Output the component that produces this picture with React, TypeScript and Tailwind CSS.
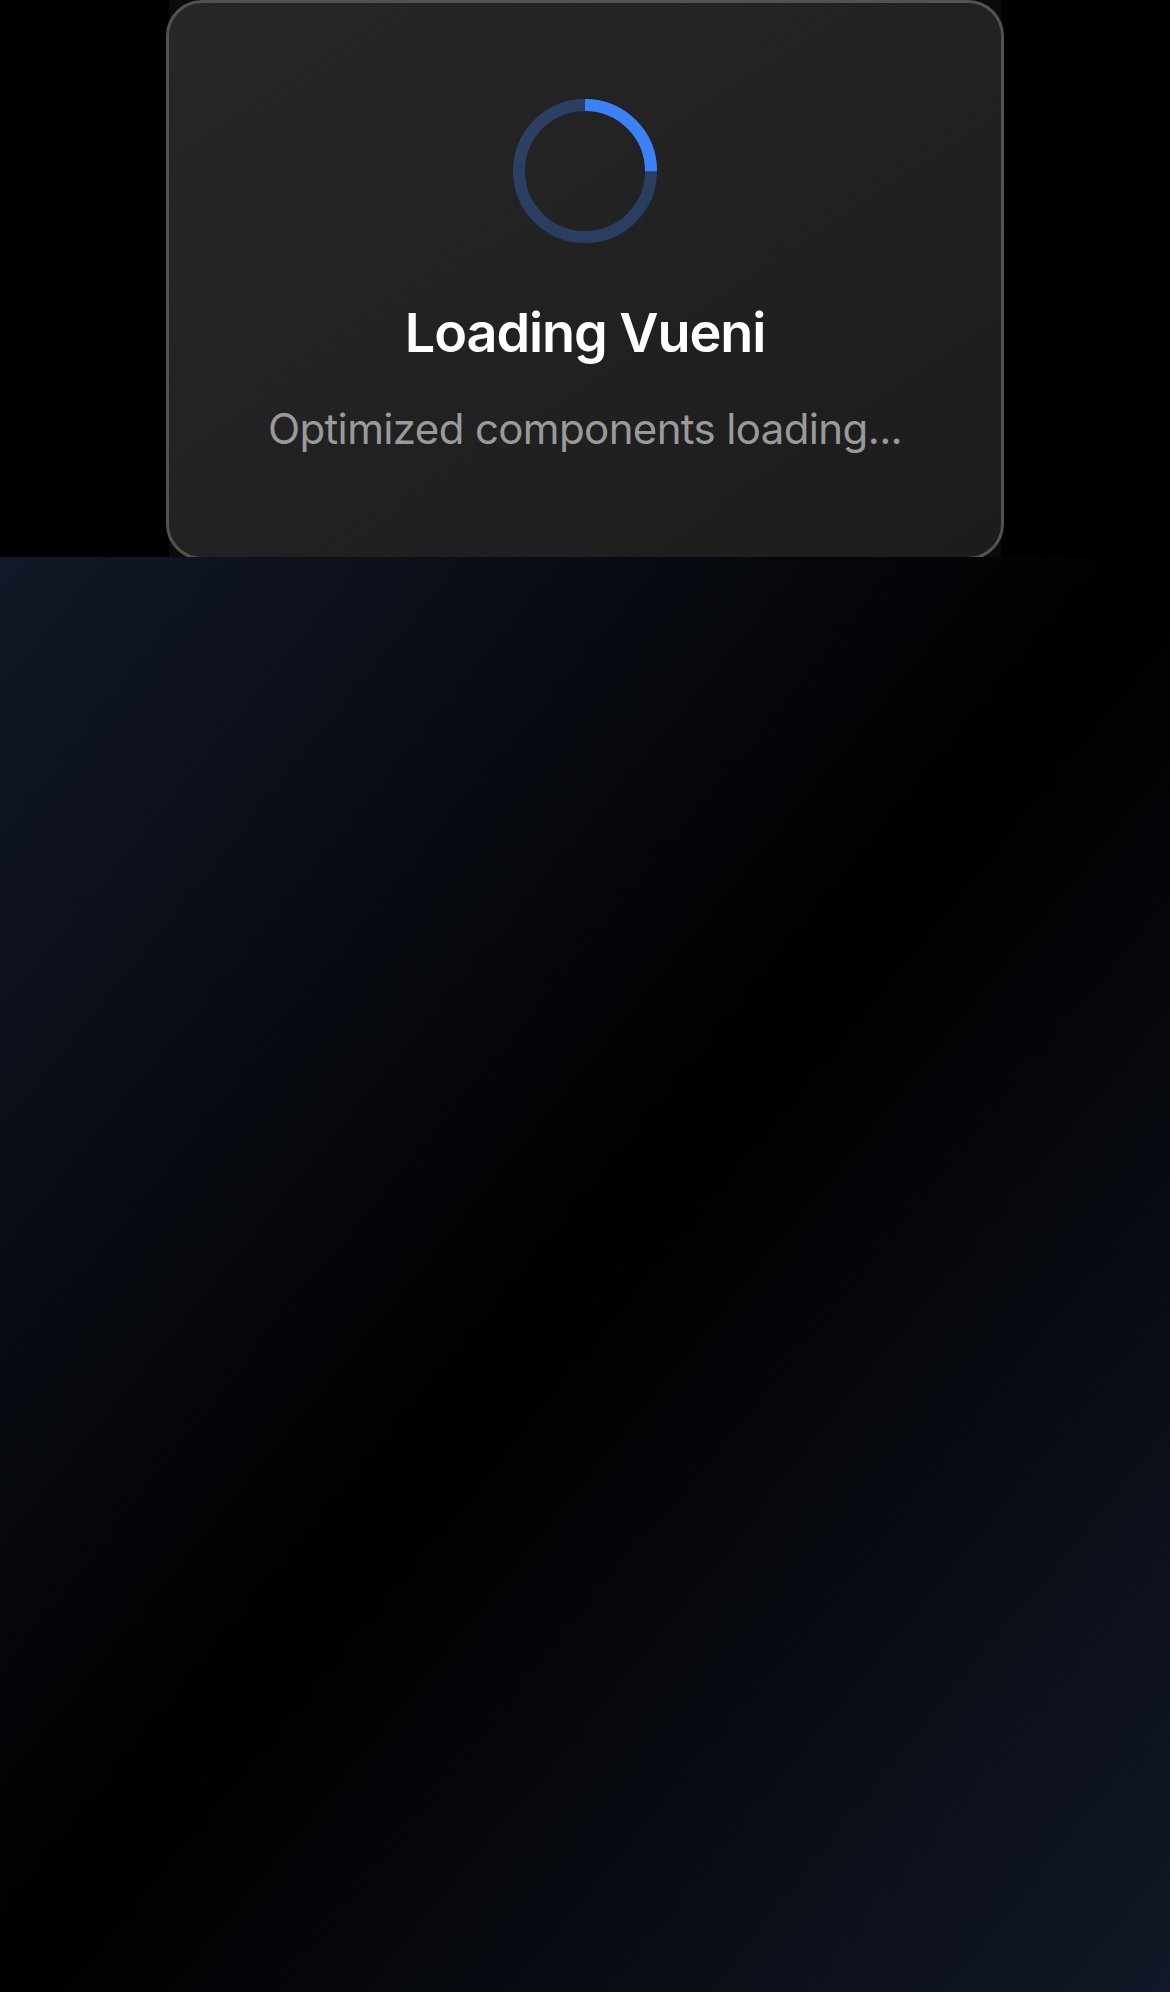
import React from 'react';

const Spinner: React.FC = () => (
    <svg className="w-[144px] h-[144px]" viewBox="0 0 144 144">
        <circle cx="72" cy="72" r="66" fill="none" stroke="#3b82f6" strokeOpacity="0.3" strokeWidth="12" />
        <circle
            cx="72"
            cy="72"
            r="66"
            fill="none"
            stroke="#3b82f6"
            strokeWidth="12"
            strokeDasharray="103.67 311.02"
            transform="rotate(-90 72 72)"
        />
    </svg>
);

const App: React.FC = () => {
    return (
        <div className="min-h-[1992px] flex flex-col bg-black font-['Inter','Liberation_Sans',sans-serif]">
            {/* loader */}
            <div className="bg-black">
                <div className="w-[832px] mx-auto bg-[#0b0b0b]">
                    <div className="-mx-[3px] -mb-[3px] rounded-[36px] border-[3px] border-[#525252] bg-[linear-gradient(to_bottom_right,#272727,#1c1c1c)] px-[60px] pt-[96px] pb-[98px] flex flex-col items-center text-center">
                        <div className="mb-[48px]">
                            <Spinner />
                        </div>
                        <h2 className="text-[54px] leading-[84px] font-semibold tracking-[-0.02em] text-white mb-[24px] whitespace-nowrap">Loading Vueni</h2>
                        <p className="text-[42px] leading-[60px] tracking-[-0.015em] text-[#9a9a9a] whitespace-nowrap">Optimized components loading...</p>
                    </div>
                </div>
            </div>

            <div className="flex-1 bg-[linear-gradient(to_bottom_right,#111827,#000000,#111827)]"></div>
        </div>
    );
};

export default App;
